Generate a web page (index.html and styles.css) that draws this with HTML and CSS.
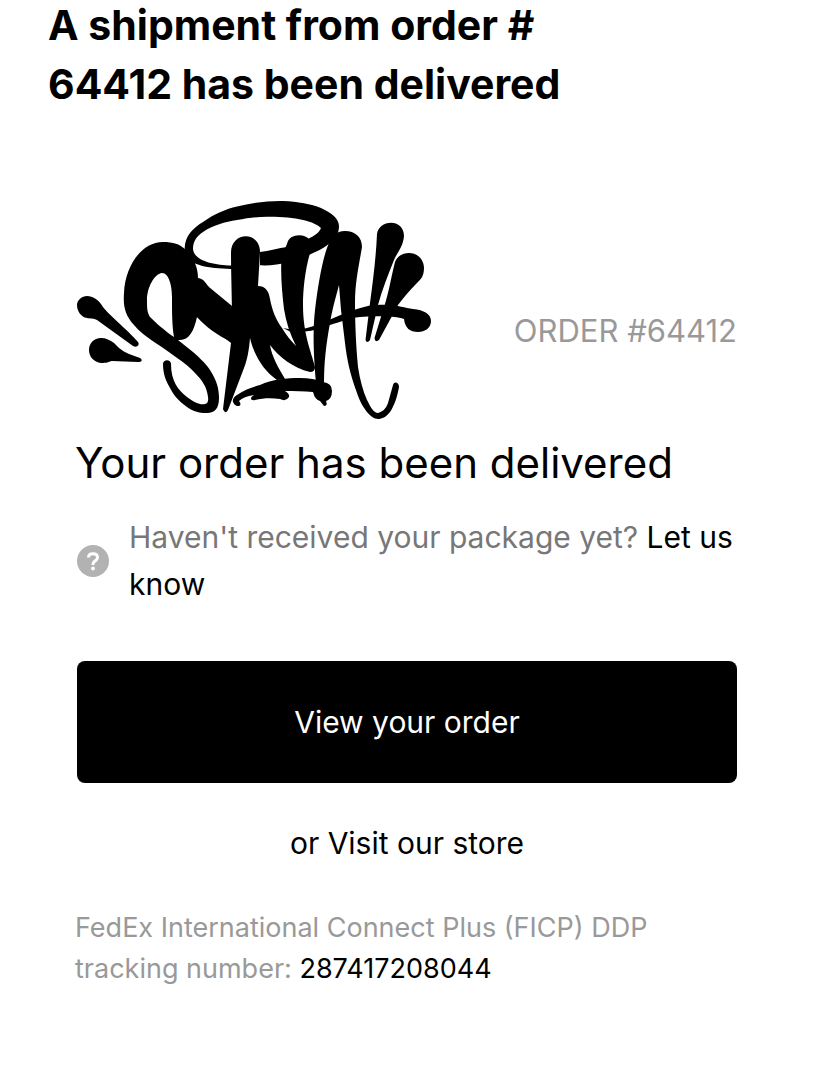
FILE: index.html
```html
<!DOCTYPE html>
<html lang="en">
<head>
<meta charset="utf-8">
<meta name="viewport" content="width=device-width, initial-scale=1">
<title>Your order has been delivered</title>
<link rel="stylesheet" href="styles.css">
</head>
<body>
<main class="mail">
  <h1 class="subject">A shipment from order #<br>64412 has been delivered</h1>
  <article class="message">
    <header class="brand">
      <svg class="logo" viewBox="77 200 354 220" role="img" aria-label="Syna">
        <!-- halo -->
        <path fill-rule="evenodd" d="M184.700 248C185 236 193 228 203 222C214 214 226 209 237 206.500C252 202.500 269 200.700 283 201C298 201.500 311 204 321 208C332 213 339 219 339 226C339 233 336 238 331 242C326 247 318 251 311 254C297 261 274 267 258 265L240 269C215 269 196 267 189 259C186 255 184.500 252 184.700 248ZM193 249C193 241 197 236 203 232C213 225 225 222 237 220C248 218 258 216.700 267 216.700C280 216.500 293 217.500 303 220C312 222 318 225 321 228C319 233 314 236 308 239C303 235 292 235 288 244L287 247C279 248 269 251 260 252V265L231 265.500C214 265 194 261 193 249Z"/>
        <!-- S -->
        <path fill-rule="evenodd" d="M124 293C125 267 141 242 163 242C173 242 180 244 186 250C194 258 198 268 198 278L232 306V342C218 336 206 327 197 317C194 331 189 340 180 340L178 340L193 352C202 360 206 364 210 370C217 381 219 389 219 398C219 408 215 413 207 413C198 413 193 411 187 407C179 401 174 396 170 388C166 381 163 374 163 364C163 359 171 359 171 364C171 381 178 390 187 397C195 403 200 405 205 404Q209 403 208 397C207 387 202 380 195 373C189 366 180 360 173 355C157 343 143 336 134 325C125 315 123 306 124 293ZM162 273C154 274 147 288 147 300C147 308 147 312 150 317C156 323 165 331 174 337C172 326 172 311 172 297C172 286 169 273 162 273Z"/>
        <!-- Y and N -->
        <path d="M198 278C204 279 206 283 210 289L223 309L232 322C232 296 231 275 231 253C231 231 260 231 260 252L258 286C266 286 269 292 270 299C272 310 276 320 282 328C286 335 291 341 296 346C290 334 286 322 284 309C282 292 280 270 282 255L287 244C289 233 305 233 310 240L310 253C305 270 303 290 303 305C303 334 311 351 315 367Q315 372 310 372C293 368 279 357 270 345C272 357 278 367 285 379L277 380C263 370 254 355 250 338C249 351 247 360 244 368L228 410Q225 415 223 409L231 343L197 317Z"/>
        <!-- A -->
        <path d="M327 248C331 237 336 231 345 231C355 231 362 237 362 247C359 265 355 282 355 303C355 323 356 347 358 367C360 380 363 391 367 400C371 408 374 413 378 413C382 412 386 409 388 403L393 385C394 381 399 382 399 387C397 398 394 406 390 412C386 417 382 419 378 419C371 419 362 408 357 393C350 374 347 360 345 343L341 310L339 285C335 300 332 310 330 323C326 345 324 362 324 383H316C313 350 313 328 315 310C318 285 322 262 327 248Z"/>
        <!-- crossbar -->
        <path d="M283 328L291 329.500L305 328.500C322 325 339 314 357 309C368 305 377 304 387 305C398 305 405 308 413 309C424 310 431 314 431 321C431 328 425 332 418 332C410 332 405 328 404 319C398 317 390 316.500 387 316.500C377 316 369 316 360 317C349 318 340 322 330 325C321 328 313 331 305 331.500L291 332Z"/>
        <!-- base stroke -->
        <path d="M233 402Q232 398 237 395C245 389 253 387 260 385C272 379 287 378 300 378C309 378 316 379 323 382Q332 383 332 391Q332 399 326 401Q328 406 324 406L320 401Q315 400 313 392C304 391 294 391 285 391Q290 394 289 397Q286 402 280 399C272 398 263 398 255 400C251 401 249 398 254 395C247 396 242 398 239 401Q242 405 239 406C235 406 234 404 233 402Z"/>
        <!-- drips -->
        <path d="M377 234C378 227 384 222.700 391 222.700C399 223 404 228 404 236C403 247 398 251 394 260C388 275 382 290 378 305L370 340Q367 344 365.500 340L370 303C373 281 376 257 377 234Z"/>
        <path d="M394.500 264C396 257 402 253 409 253C418 253 424 260 424 268C424 277 420 280 416 284C410 290 404 297 398 305L379 340Q375 343 374.500 338L384 307C389 292 391 278 394.500 264Z"/>
        <path d="M77 305C77 300 82 296 87 296C93 296 98 300 101 304C106 313 127 329 138 342C140 345 137 348 133 346L97 320C94 318 90 319 87 318C81 317 77 311 77 305Z"/>
        <path d="M89 350C89 343 94 338 101 338C106 338 110 340 114 343C119 348 122 351 129 354L140 358C143 360 142 362 138 362L112 361C108 362 107 363 101 363C94 362 89 357 89 350Z"/>
      </svg>
      <p class="order-number">ORDER #64412</p>
    </header>
    <h2 class="title">Your order has been delivered</h2>
    <div class="help">
      <svg class="help-icon" viewBox="0 0 32 32" aria-hidden="true">
        <circle class="disc" cx="16" cy="16" r="16"/>
        <path class="hook" d="M11.500 12.500C11.500 10 13.500 8.800 16 8.800C18.700 8.800 20.500 10.300 20.500 12.500C20.500 14.300 19.500 15.200 18 16.100C16.600 17 16 17.600 16 19.300V20"/>
        <circle class="dot" cx="16" cy="23.500" r="1.900"/>
      </svg>
      <p class="help-text">Haven't received your package yet? <a href="#help">Let us know</a></p>
    </div>
    <a class="button" href="#order">View your order</a>
    <p class="store">or <a href="#store">Visit our store</a></p>
    <p class="tracking">FedEx International Connect Plus (FICP) DDP tracking number: <a href="#tracking">287417208044</a></p>
  </article>
</main>
</body>
</html>
```
FILE: styles.css
```css
* { box-sizing: border-box; }

body {
  margin: 0;
  background: #fff;
  color: #000;
  font-family: Inter, "Liberation Sans", sans-serif;
}

h1, h2, p { margin: 0; }

a { color: #000; text-decoration: none; }

.mail { padding: 0 48px 48px; }

/* The subject's first line sits tight against the top edge. */
.subject {
  margin-top: -4px;
  padding-bottom: 86px;
  font-size: 41px;
  font-weight: 700;
  line-height: 59px;
}

.message { padding: 0 27px; }

.brand {
  display: flex;
  align-items: center;
  justify-content: space-between;
  gap: 24px;
  padding: 0 2px;
}

.logo { width: 354px; flex: none; fill: #000; }

.order-number {
  padding-top: 42px;
  color: #999;
  font-size: 31px;
  line-height: 40px;
  white-space: nowrap;
}

.title {
  padding-top: 15px;
  font-size: 42px;
  font-weight: 400;
  line-height: 56px;
}

.help {
  display: flex;
  align-items: center;
  gap: 20px;
  padding: 23px 2px 0;
}

.help-icon { width: 32px; flex: none; }
.disc { fill: #b2b2b2; }
.dot { fill: #fff; }
.hook { fill: none; stroke: #fff; stroke-width: 3; }

.help-text {
  color: #777;
  font-size: 30px;
  line-height: 47px;
}

.button {
  display: block;
  margin: 53px 2px 0;
  padding: 38px 16px;
  border-radius: 8px;
  background: #000;
  color: #fff;
  font-size: 30px;
  line-height: 46px;
  text-align: center;
}

.store {
  padding-top: 36px;
  font-size: 30px;
  line-height: 48px;
  text-align: center;
}

.tracking {
  padding-top: 40px;
  color: #999;
  font-size: 27px;
  line-height: 41px;
}
```
